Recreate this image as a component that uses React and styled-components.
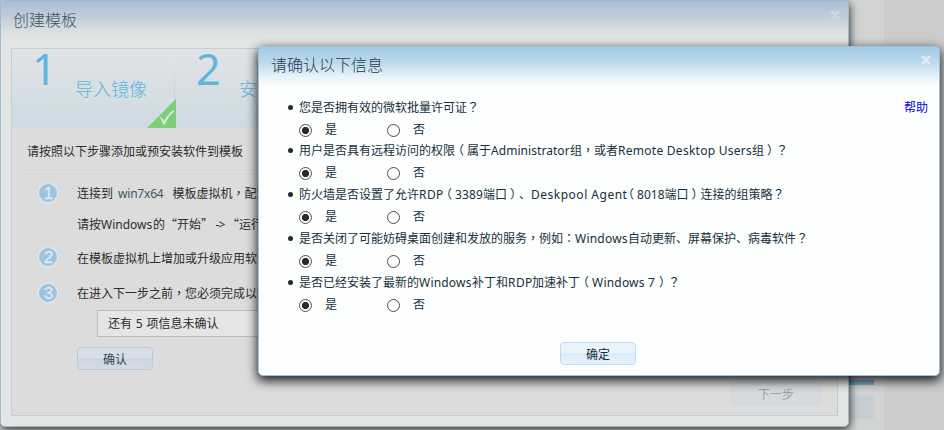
import React from "react";
import styled, { createGlobalStyle } from "styled-components";

const Global = createGlobalStyle`
  * { box-sizing: border-box; }
  body { margin: 0; overflow: hidden; text-spacing-trim: space-all; }
  body, button { font: 12px/16px "Noto Sans", "Noto Sans CJK SC", sans-serif; }
`;

const Desktop = styled.div`
  position: relative;
  width: 944px;
  height: 430px;
  overflow: hidden;
  background: linear-gradient(90deg, #d1d4d3 884px, #cccccc 884px);
`;

const Backdrop = styled.div`
  display: flex;
  flex-direction: column;
  width: 874px;
  padding-top: 380px;
  gap: 10px;
`;

const Strip = styled.div`
  height: ${(p) => p.$h}px;
  background: ${(p) => p.$color};
`;

const Dialog = styled.section`
  position: absolute;
  left: ${(p) => p.$x}px;
  top: ${(p) => p.$y}px;
  width: ${(p) => p.$w}px;
  height: ${(p) => p.$h}px;
  display: flex;
  flex-direction: column;
  border: 1px solid ${(p) => (p.$dim ? "#9cbbd1" : "#9cc3de")};
  border-radius: 5px;
  background: ${(p) => (p.$dim ? "#e3e5e4" : "#fdfefe")};
  box-shadow: ${(p) => (p.$dim ? "1px 3px 9px rgba(0,0,0,.75)" : "0 4px 11px 1px rgba(0,0,0,.85)")};
  color: ${(p) => (p.$dim ? "#2d2d2d" : "#16303c")};
`;

const TitleBar = styled.header`
  display: flex;
  justify-content: space-between;
  height: 39px;
  flex: none;
  padding: ${(p) => (p.$dim ? 9 : 8)}px 8px 0 12px;
  border-radius: 4px 4px 0 0;
  background: ${(p) =>
    p.$dim
      ? "linear-gradient(#a8bfd5, #c3cfda 45%, #d9dee1 75%, #e3e5e4)"
      : "linear-gradient(#a3c9e6, #bedaef 42%, #e3f1fa 72%, #fdfefe)"};
`;

const Title = styled.h1`
  margin: 0;
  font-size: 16px;
  line-height: 20px;
  font-weight: 300;
  color: ${(p) => (p.$dim ? "#43535f" : "#243e4e")};
`;

const CloseSvg = styled.svg`
  display: block;
  width: 10px;
  height: 10px;
`;

const Panel = styled.div`
  margin: 8px 10px 10px;
  flex: 1;
  display: flex;
  flex-direction: column;
  border: 1px solid #c1cfd9;
  background: #dcdcdc;
`;

const Steps = styled.div`
  display: flex;
  height: 79px;
  flex: none;
  background: linear-gradient(#e1e3e4, #cddbe2);
`;

const Step = styled.div`
  position: relative;
  display: flex;
  width: 163px;
  padding-left: ${(p) => p.$pad}px;
  color: #63b4dd;
  border-style: solid;
  border-image: linear-gradient(#e1e3e4 15%, #bcd0dc 60%, #c3d5df) 1;
  border-width: 0 1px 0 0;
`;

const StepNumber = styled.span`
  width: ${(p) => p.$w}px;
  flex: none;
  font-size: 43px;
  line-height: 40px;
`;

const StepName = styled.span`
  padding-top: 28px;
  font-size: 18px;
  line-height: 24px;
  font-weight: 300;
  white-space: nowrap;
`;

const DoneMark = styled.svg`
  position: absolute;
  right: -2px;
  bottom: 0;
  width: 29px;
  height: 29px;
`;

const Body = styled.div`
  display: flex;
  flex-direction: column;
  flex: 1;
  padding: 16px 15px 0;
`;

const Intro = styled.p`
  margin: 0;
  padding-bottom: 10px;
  border-bottom: 1px solid #d1d3d4;
  box-shadow: 0 1px #e4e4e4;
`;

const Instruction = styled.div`
  display: flex;
  height: ${(p) => p.$h}px;
  padding: ${(p) => p.$top || 0}px 0 0 10px;
  white-space: nowrap;
`;

const Badge = styled.svg`
  width: 22px;
  height: 22px;
  margin-right: 18px;
  flex: none;
  font: 17px "Liberation Sans", sans-serif;
`;

const Copy = styled.div`
  display: grid;
  align-content: start;
  row-gap: 15px;
  padding-top: ${(p) => p.$top || 4}px;
`;

const Machine = styled.span`
  margin: 0 9px 0 5px;
  color: #43565f;
  letter-spacing: -0.2px;
`;

const StatusBox = styled.div`
  margin-left: 70px;
  height: 27px;
  flex: none;
  padding: 5px 10px;
  border: 1px solid #bcbcbc;
  background: #e5e5e5;
  width: 540px;
  word-spacing: 0.7px;
`;

const Button = styled.button`
  width: ${(p) => p.$w || 76}px;
  height: 23px;
  flex: none;
  padding: 2px 0 0;
  border-radius: 4px;
  border: 1px solid ${(p) => (p.$dim ? "#b7cbdb" : "#c0dcf0")};
  color: ${(p) => (p.$dim ? "#344651" : "#16303c")};
  background: ${(p) =>
    p.$dim
      ? "linear-gradient(#d7dee5 50%, #cbd7e1 50%, #d2dbe3)"
      : "linear-gradient(#ebf4fd 50%, #dcebf9 50%, #e5f2fc)"};
`;

const ConfirmButton = styled(Button)`
  margin: 10px 0 0 50px;
`;

const NextButton = styled(Button)`
  margin: 12px 2px 0 0;
  align-self: flex-end;
  border-color: #cdd5de;
  background: #d6dade;
  color: #9fa2a6;
`;

const Questions = styled.div`
  display: flex;
  justify-content: space-between;
  height: 256px;
  padding: 14px 11px 0 28px;
`;

const List = styled.ul`
  list-style: none;
  margin: 0;
  padding: 0;
`;

const Item = styled.li`
  height: 44px;
  white-space: nowrap;
  &:first-child { height: 43px; }
`;

const Question = styled.div`
  display: flex;
  height: 16px;
  &::before {
    content: "";
    width: 5px;
    height: 5px;
    margin: 5px 6px 0 1px;
    border-radius: 50%;
    background: #1f2b31;
  }
`;

const Latin = styled.span`
  display: inline-block;
  width: ${(p) => p.$w}px;
  letter-spacing: ${(p) => p.$ls || 0}px;
`;

/* Full-width marks set in the middle of their em square. */
const Mark = styled.span`
  font-family: "Noto Sans CJK TC", sans-serif;
  line-height: 1;
`;

/* Brackets take their half-width form, centred in a full em. */
const Bracket = styled.span`
  display: inline-block;
  width: 12px;
  text-align: center;
  font-family: "Noto Sans CJK SC", sans-serif;
  font-feature-settings: "halt";
  line-height: 1;
`;

const Quote = styled.span`
  font-family: "Noto Sans CJK SC", sans-serif;
  line-height: 1;
`;

const Answers = styled.div`
  display: flex;
  padding: 5px 0 0 12px;
`;

const Option = styled.label`
  display: flex;
  align-items: center;
  width: 88px;
  height: 18px;
  gap: 13px;
`;

const Radio = styled.span`
  width: 13px;
  height: 13px;
  border: 1px solid #4d4d4d;
  border-radius: 50%;
  background: ${(p) => (p.$on ? "radial-gradient(circle, #2b2b2b 3.2px, #fff 4px)" : "#fff")};
`;

const Help = styled.a`
  color: #0000f0;
  height: 16px;
`;

const Footer = styled.footer`
  display: flex;
  justify-content: center;
  padding-right: 2px;
`;

function Close({ color }) {
  return (
    <CloseSvg viewBox="0 0 10 10">
      <path d="M2 2l6 6M8 2l-6 6" stroke={color} strokeWidth="3" strokeLinecap="round" />
    </CloseSvg>
  );
}

function NumberBadge({ n }) {
  return (
    <Badge viewBox="0 0 22 22">
      <circle cx="11" cy="11" r="9.8" fill="#9bc4e0" stroke="#e1e4e6" strokeWidth="1.6" />
      <text x="11.5" y="17" textAnchor="middle" fill="#e1e8ec" stroke="#e1e8ec" strokeWidth=".3">{n}</text>
    </Badge>
  );
}

function Text({ children }) {
  return children.split(/([，：？（）“”])/).map((s, i) => {
    if (/^[，：？]$/.test(s)) return <Mark key={i}>{s}</Mark>;
    if (/^[（）]$/.test(s)) return <Bracket key={i}>{s}</Bracket>;
    if (/^[“”]$/.test(s)) return <Quote key={i}>{s}</Quote>;
    return s;
  });
}

const questions = [
  ["您是否拥有效的微软批量许可证？"],
  ["用户是否具有远程访问的权限（属于", { t: "Administrator", w: 79, ls: 0.05 }, "组，或者", { t: "Remote Desktop Users", w: 134, ls: 0.26 }, "组）？"],
  ["防火墙是否设置了允许", { t: "RDP", w: 24, ls: 0.4 }, "（", { t: "3389", w: 28, ls: 0.1 }, "端口）、", { t: "Deskpool Agent", w: 94, ls: 0.5 }, "（", { t: "8018", w: 27.5 }, "端口）连接的组策略？"],
  ["是否关闭了可能妨碍桌面创建和发放的服务，例如：", { t: "Windows", w: 53, ls: 0.2 }, "自动更新、屏幕保护、病毒软件？"],
  ["是否已经安装了最新的", { t: "Windows", w: 53, ls: 0.2 }, "补丁和", { t: "RDP", w: 24, ls: 0.4 }, "加速补丁（", { t: "Windows 7", w: 64, ls: 0.2 }, "）？"],
];

export default function App() {
  return (
    <Desktop>
      <Global />
      <Backdrop>
        <Strip $h={5} $color="#78b1cc" />
        <Strip $h={24} $color="#c7ced2" />
      </Backdrop>

      <Dialog $dim $x={0} $y={0} $w={849} $h={427}>
        <TitleBar $dim>
          <Title $dim>创建模板</Title>
          <Close color="#ccd6e0" />
        </TitleBar>
        <Panel>
          <Steps>
            <Step $pad={20}>
              <StepNumber $w={43}>1</StepNumber>
              <StepName>导入镜像</StepName>
              <DoneMark viewBox="0 0 29 29">
                <path d="M0 29L29 0V29Z" fill="#7dcd7d" />
                <path d="M12.5 18q3 0 5.5 6l-1.5 2.5q-1.500-6-4-8.500z" fill="#dcebdc" />
                <path d="M17.200 25q3-8.500 9.500-13" fill="none" stroke="#dcebdc" strokeWidth="1.900" />
              </DoneMark>
            </Step>
            <Step $pad={21}>
              <StepNumber $w={43}>2</StepNumber>
              <StepName>安装软件</StepName>
            </Step>
          </Steps>
          <Body>
            <Intro>请按照以下步骤添加或预安装软件到模板</Intro>
            <Instruction $h={75} $top={11}>
              <NumberBadge n="1" />
              <Copy>
                <span>连接到<Machine>win7x64</Machine><Text>模板虚拟机，配置网络</Text></span>
                <span>请按<Latin $w={52}>Windows</Latin><Text>的“开始”</Text><Latin $w={14} $ls={-0.8}>&nbsp;-&gt;</Latin><Text>“运行”</Text></span>
              </Copy>
            </Instruction>
            <Instruction $h={36}>
              <NumberBadge n="2" />
              <Copy $top={5}><span>在模板虚拟机上增加或升级应用软件</span></Copy>
            </Instruction>
            <Instruction $h={28}>
              <NumberBadge n="3" />
              <Copy><span><Text>在进入下一步之前，您必须完成以下确认</Text></span></Copy>
            </Instruction>
            <StatusBox>还有 5 项信息未确认</StatusBox>
            <ConfirmButton $dim>确认</ConfirmButton>
            <NextButton $w={88}>下一步</NextButton>
          </Body>
        </Panel>
      </Dialog>

      <Dialog $x={258} $y={46} $w={682} $h={330}>
        <TitleBar>
          <Title>请确认以下信息</Title>
          <Close color="#deebf6" />
        </TitleBar>
        <Questions>
          <List>
            {questions.map((q, i) => (
              <Item key={i}>
                <Question>
                  <div>
                    {q.map((r, k) =>
                      typeof r === "string" ? <Text key={k}>{r}</Text> : <Latin key={k} $w={r.w} $ls={r.ls}>{r.t}</Latin>
                    )}
                  </div>
                </Question>
                <Answers>
                  <Option><Radio $on />是</Option>
                  <Option><Radio />否</Option>
                </Answers>
              </Item>
            ))}
          </List>
          <Help>帮助</Help>
        </Questions>
        <Footer><Button>确定</Button></Footer>
      </Dialog>
    </Desktop>
  );
}
